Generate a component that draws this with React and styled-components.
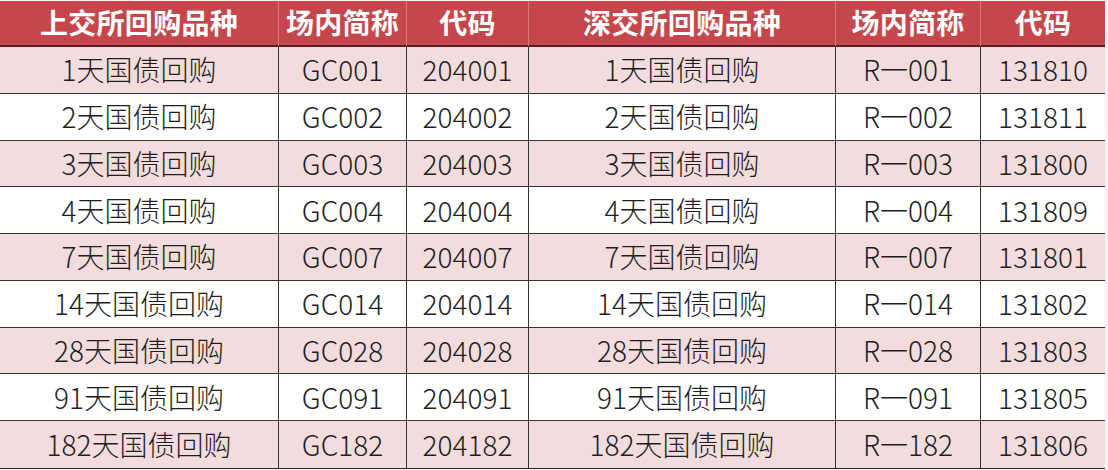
import React from "react";
import styled, { createGlobalStyle } from "styled-components";

const Global = createGlobalStyle`
  html, body { margin: 0; padding: 0; background: #fbf3f3; }
  body { font-family: "Noto Sans CJK SC", "Noto Sans", sans-serif; }
`;

const Page = styled.div`
  width: 1108px;
  height: 470px;
  padding-top: 1px;
  box-sizing: border-box;
  background: #fbf3f3;
`;

const Table = styled.div`
  display: grid;
  width: 1105px;
  grid-template-columns: 279px 128px 122px 307px 145px 124px;
  grid-template-rows: 46px;
  grid-auto-rows: 46.75px;
  border-right: 2px solid #3a2a2a;
  box-sizing: border-box;
  border-bottom: 1px solid #2a2a2a;
`;

const HeadCell = styled.div`
  background: #c6474b;
  color: #fff;
  font-weight: 700;
  font-size: 28px;
  letter-spacing: 0.3px;
  display: flex;
  align-items: center;
  justify-content: center;
  border-bottom: 2px solid #5c1d20;
  border-right: ${(p) => (p.$last ? "none" : "1px solid #d77a7c")};
  box-sizing: border-box;
  padding-bottom: 2px;
`;

const Cell = styled.div`
  background: ${(p) => (p.$alt ? "#f2dcdd" : "#ffffff")};
  color: #1e1e1e;
  font-size: 28px;
  font-weight: 300;
  display: flex;
  align-items: center;
  justify-content: center;
  border-bottom: ${(p) => (p.$lastRow ? "none" : "1px solid #333")};
  border-right: ${(p) => (p.$last ? "none" : "1.5px solid #333")};
  box-sizing: border-box;
  padding-bottom: 1px;
`;

const heads = ["上交所回购品种", "场内简称", "代码", "深交所回购品种", "场内简称", "代码"];
const days = ["1", "2", "3", "4", "7", "14", "28", "91", "182"];
const sh = ["204001", "204002", "204003", "204004", "204007", "204014", "204028", "204091", "204182"];
const sz = ["131810", "131811", "131800", "131809", "131801", "131802", "131803", "131805", "131806"];

export default function App() {
  return (
    <Page>
      <Global />
      <Table>
        {heads.map((h, i) => (
          <HeadCell key={"h" + i} $last={i === 5}>{h}</HeadCell>
        ))}
        {days.map((d, r) => {
          const code = d.padStart(3, "0");
          const vals = [
            `${d}天国债回购`,
            `GC${code}`,
            sh[r],
            `${d}天国债回购`,
            `R一${code}`,
            sz[r],
          ];
          return vals.map((v, c) => (
            <Cell key={r + "-" + c} $alt={r % 2 === 0} $last={c === 5} $lastRow={r === days.length - 1}>
              {v}
            </Cell>
          ));
        })}
      </Table>
    </Page>
  );
}
